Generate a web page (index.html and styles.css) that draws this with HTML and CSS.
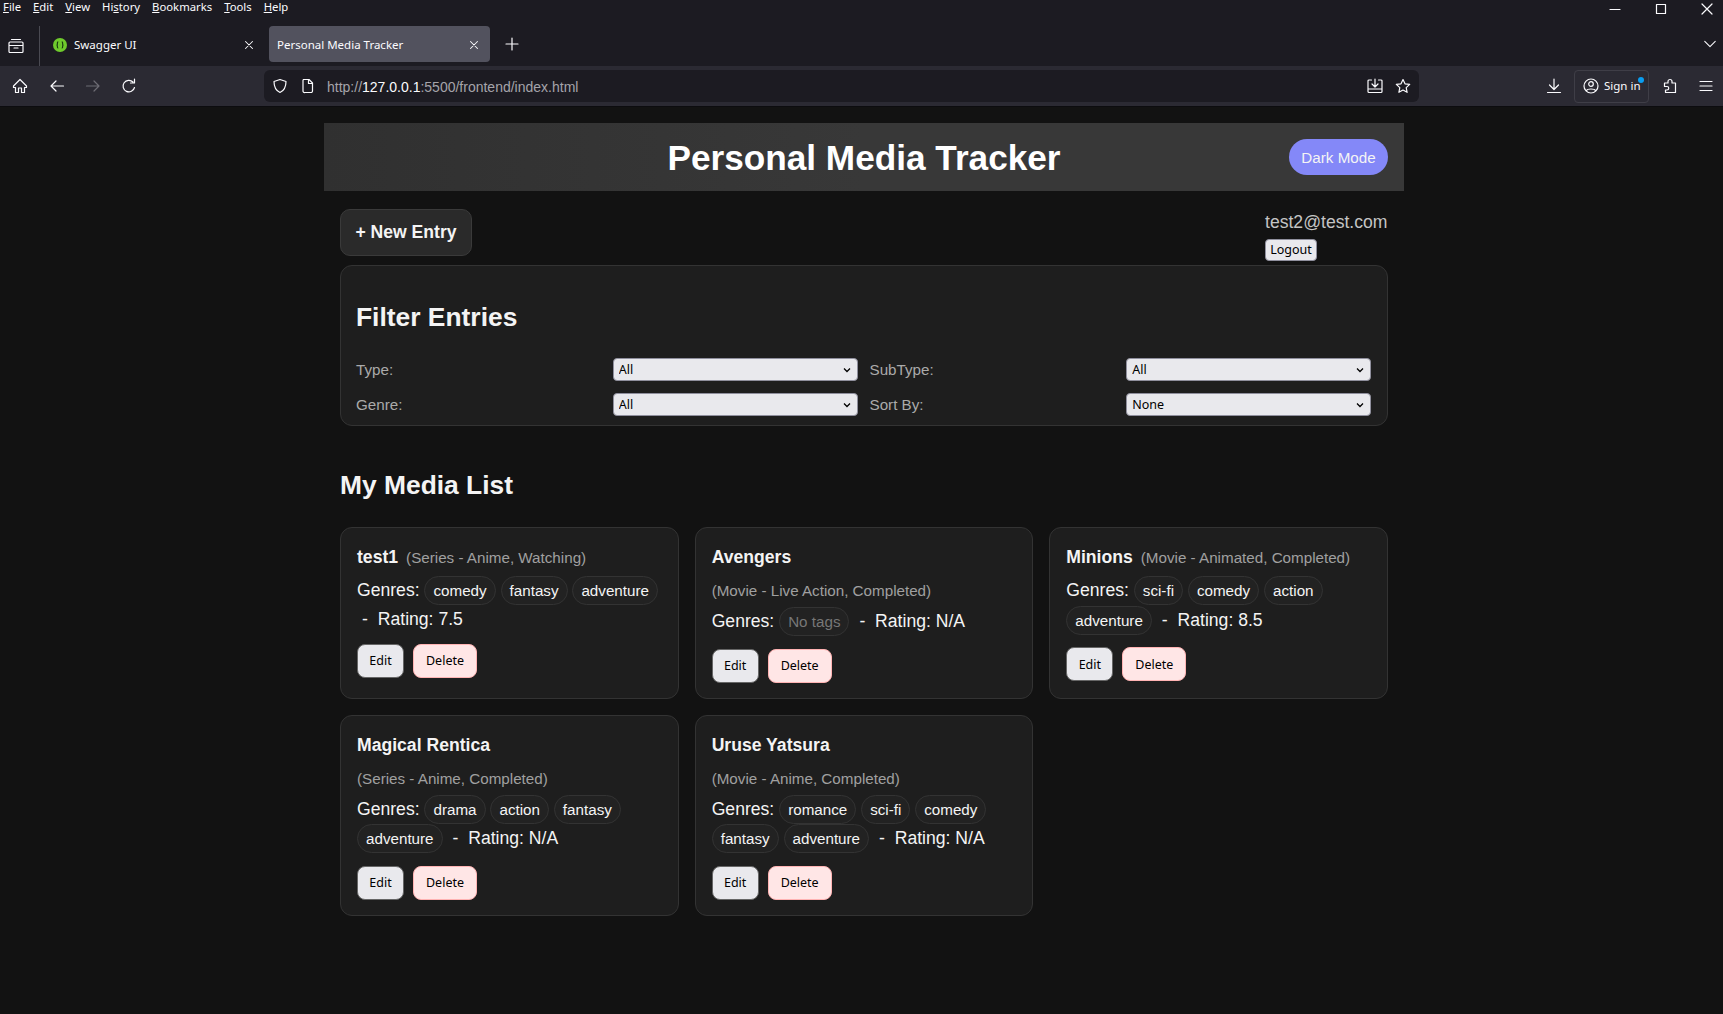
FILE: index.html
```html
<!DOCTYPE html>
<html lang="en">
<head>
    <meta charset="UTF-8">
    <meta name="viewport" content="width=device-width, initial-scale=1.0">
    <title>Personal Media Tracker</title>
    <link rel="stylesheet" href="styles.css">
</head>
<body>

    <!-- Browser chrome -->
    <div class="browser">
        <div class="menubar">
            <span class="menu-item"><u>F</u>ile</span>
            <span class="menu-item"><u>E</u>dit</span>
            <span class="menu-item"><u>V</u>iew</span>
            <span class="menu-item">Hi<u>s</u>tory</span>
            <span class="menu-item"><u>B</u>ookmarks</span>
            <span class="menu-item"><u>T</u>ools</span>
            <span class="menu-item"><u>H</u>elp</span>
            <div class="window-controls">
                <svg class="icon" viewBox="0 0 16 16"><path d="M3 8.500h10"/></svg>
                <svg class="icon" viewBox="0 0 16 16"><path d="M3.500 3.500h9v9h-9z"/></svg>
                <svg class="icon" viewBox="0 0 16 16"><path d="M3 3l10 10M13 3L3 13"/></svg>
            </div>
        </div>

        <div class="tabstrip">
            <div class="tab-view">
                <svg class="icon" viewBox="0 0 16 16"><path d="M3.500 1.500h9M2 4h12a1 1 0 0 1 1 1v8.500a1 1 0 0 1-1 1H2a1 1 0 0 1-1-1V5a1 1 0 0 1 1-1zM1 7.500h14M6 10h4"/></svg>
            </div>
            <div class="tab">
                <span class="favicon"><svg viewBox="0 0 16 16"><path d="M6 4.500C4.800 4.500 5 6 5 7s-1 1-1 1 1 0 1 1-.2 2.500 1 2.500M10 4.500c1.200 0 1 1.500 1 2.500s1 1 1 1-1 0-1 1 .2 2.500-1 2.500M7 8h.1M9 8h.1"/></svg></span>
                <span class="tab-title">Swagger UI</span>
                <svg class="icon tab-close" viewBox="0 0 16 16"><path d="M4 4l8 8M12 4l-8 8"/></svg>
            </div>
            <div class="tab tab-active">
                <span class="tab-title">Personal Media Tracker</span>
                <svg class="icon tab-close" viewBox="0 0 16 16"><path d="M4 4l8 8M12 4l-8 8"/></svg>
            </div>
            <svg class="icon tab-new" viewBox="0 0 16 16"><path d="M8 2v12M2 8h12"/></svg>
            <svg class="icon tab-list" viewBox="0 0 16 16"><path d="M2 5l6 6 6-6"/></svg>
        </div>

        <div class="toolbar">
            <div class="nav-buttons">
                <svg class="icon" viewBox="0 0 16 16"><path d="M8 1.500L1.500 8v1.500h2v5h3V10h3v4.500h3v-5h2V8z"/></svg>
                <svg class="icon" viewBox="0 0 16 16"><path d="M14.500 8H2M7 3L2 8l5 5"/></svg>
                <svg class="icon icon-dim" viewBox="0 0 16 16"><path d="M1.500 8H14M9 3l5 5-5 5"/></svg>
                <svg class="icon" viewBox="0 0 16 16"><path d="M13.500 9.500A5.800 5.800 0 1 1 12 4M13.500 1v4h-4"/></svg>
            </div>
            <div class="urlbar">
                <svg class="icon" viewBox="0 0 16 16"><path d="M8 1.500l6 2c0 5.500-1.500 9-6 11-4.500-2-6-5.500-6-11z"/></svg>
                <svg class="icon url-page" viewBox="0 0 16 16"><path d="M3.500 1.500h5.500l3.500 3.500v8a1.500 1.500 0 0 1-1.500 1.500h-6A1.500 1.500 0 0 1 3 13V3a1.500 1.500 0 0 1 .500-1.500zM8.500 1.500V5.500h4"/></svg>
                <span class="url-text">http://<b>127.0.0.1</b>:5500/frontend/index.html</span>
                <div class="url-actions">
                    <svg class="icon" viewBox="0 0 16 16"><path d="M4.500 2H2a1 1 0 0 0-1 1v10.500a1 1 0 0 0 1 1h12a1 1 0 0 0 1-1V3a1 1 0 0 0-1-1h-2.500M1 11h14M8 1v7M5 6l3 3 3-3"/></svg>
                    <svg class="icon" viewBox="0 0 16 16"><path d="M8 1.500l2 4.300 4.700.6-3.500 3.200.9 4.700L8 12l-4.100 2.300.9-4.700L1.300 6.400 6 5.800z"/></svg>
                </div>
            </div>
            <div class="tool-buttons">
                <svg class="icon" viewBox="0 0 16 16"><path d="M8 1v10M3.500 7L8 11.500 12.500 7M1.500 14.500h13"/></svg>
                <div class="signin">
                    <svg class="icon" viewBox="0 0 16 16"><circle cx="8" cy="8" r="7"/><circle cx="8" cy="6" r="2.300"/><path d="M3.500 12.500c1-2 8-2 9 0"/></svg>
                    <span>Sign in</span>
                    <span class="signin-dot"></span>
                </div>
                <svg class="icon" viewBox="0 0 16 16"><path d="M6 3.500a2 2 0 1 1 4 0V5h3.500v9.500h-10V12H5a1.700 1.700 0 0 0 0-3.500H2.500V5H6z"/></svg>
                <svg class="icon" viewBox="0 0 16 16"><path d="M2 3.500h12M2 8h12M2 12.500h12"/></svg>
            </div>
        </div>
    </div>

    <!-- Page -->
    <div class="container">
        <header class="site-header">
            <span></span>
            <h1>Personal Media Tracker</h1>
            <button class="theme-toggle">Dark Mode</button>
        </header>

        <main class="content">
            <div class="top-bar">
                <button class="new-entry">+ New Entry</button>
                <div class="user-box">
                    <div class="user-email">test2@test.com</div>
                    <button class="logout">Logout</button>
                </div>
            </div>

            <!-- Filters -->
            <section class="filters">
                <h2>Filter Entries</h2>
                <div class="filter-grid">
                    <label>Type:</label>
                    <select><option>All</option></select>
                    <label>SubType:</label>
                    <select><option>All</option></select>
                    <label>Genre:</label>
                    <select><option>All</option></select>
                    <label>Sort By:</label>
                    <select><option>None</option></select>
                </div>
            </section>

            <h2 class="list-title">My Media List</h2>

            <div class="media-grid">
                <article class="card">
                    <div class="card-head">
                        <strong class="card-title">test1</strong>
                        <span class="card-meta">(Series - Anime, Watching)</span>
                    </div>
                    <div class="card-info">
                        Genres: <span class="tag">comedy</span> <span class="tag">fantasy</span> <span class="tag">adventure</span>
                        <span class="sep">-</span> Rating: 7.5
                    </div>
                    <div class="card-actions">
                        <button class="btn-edit">Edit</button>
                        <button class="btn-delete">Delete</button>
                    </div>
                </article>

                <article class="card">
                    <div class="card-head">
                        <strong class="card-title">Avengers</strong>
                        <span class="card-meta">(Movie - Live Action, Completed)</span>
                    </div>
                    <div class="card-info">
                        Genres: <span class="tag tag-empty">No tags</span>
                        <span class="sep">-</span> Rating: N/A
                    </div>
                    <div class="card-actions">
                        <button class="btn-edit">Edit</button>
                        <button class="btn-delete">Delete</button>
                    </div>
                </article>

                <article class="card">
                    <div class="card-head">
                        <strong class="card-title">Minions</strong>
                        <span class="card-meta">(Movie - Animated, Completed)</span>
                    </div>
                    <div class="card-info">
                        Genres: <span class="tag">sci-fi</span> <span class="tag">comedy</span> <span class="tag">action</span> <span class="tag">adventure</span>
                        <span class="sep">-</span> Rating: 8.5
                    </div>
                    <div class="card-actions">
                        <button class="btn-edit">Edit</button>
                        <button class="btn-delete">Delete</button>
                    </div>
                </article>

                <article class="card">
                    <div class="card-head">
                        <strong class="card-title">Magical Rentica</strong>
                        <span class="card-meta">(Series - Anime, Completed)</span>
                    </div>
                    <div class="card-info">
                        Genres: <span class="tag">drama</span> <span class="tag">action</span> <span class="tag">fantasy</span> <span class="tag">adventure</span>
                        <span class="sep">-</span> Rating: N/A
                    </div>
                    <div class="card-actions">
                        <button class="btn-edit">Edit</button>
                        <button class="btn-delete">Delete</button>
                    </div>
                </article>

                <article class="card">
                    <div class="card-head">
                        <strong class="card-title">Uruse Yatsura</strong>
                        <span class="card-meta">(Movie - Anime, Completed)</span>
                    </div>
                    <div class="card-info">
                        Genres: <span class="tag">romance</span> <span class="tag">sci-fi</span> <span class="tag">comedy</span> <span class="tag">fantasy</span> <span class="tag">adventure</span>
                        <span class="sep">-</span> Rating: N/A
                    </div>
                    <div class="card-actions">
                        <button class="btn-edit">Edit</button>
                        <button class="btn-delete">Delete</button>
                    </div>
                </article>
            </div>
        </main>
    </div>

</body>
</html>
```

FILE: styles.css
```css
/* General Styles */
* {
    box-sizing: border-box;
}

html, body {
    height: 100%;
}

body {
    margin: 0;
    overflow: hidden;
    font-family: 'Liberation Sans', Arial, sans-serif;
    font-size: 16px;
    line-height: 1.5;
    background-color: #121212;
    color: #f4f4f4;
}

button, select {
    font-family: 'Noto Sans', sans-serif;
    font-size: 12.5px;
    color: #000;
}

/* Browser chrome */
.browser {
    font-family: 'Noto Sans', sans-serif;
    font-size: 11.5px;
    color: #fbfbfe;
    background-color: #1c1b22;
}

.icon {
    width: 16px;
    height: 16px;
    flex: none;
    fill: none;
    stroke: #fbfbfe;
    stroke-width: 1.2;
    stroke-linejoin: round;
    stroke-linecap: round;
}

.icon-dim {
    stroke: #6d6c74;
}

.menubar {
    display: flex;
    align-items: flex-start;
    height: 26px;
    padding-left: 3px;
    gap: 12px;
    font-size: 11.3px;
    line-height: 14px;
}

.window-controls {
    display: flex;
    gap: 30px;
    margin-left: auto;
    padding-right: 8px;
    padding-top: 1px;
}

.tabstrip {
    display: flex;
    align-items: center;
    height: 40px;
    padding-bottom: 4px;
}

.tab-view {
    display: flex;
    align-items: center;
    width: 40px;
    height: 40px;
    margin-bottom: -4px;
    padding-left: 8px;
    border-right: 1px solid #4a4a52;
}

.tab {
    display: flex;
    align-items: center;
    width: 221px;
    height: 36px;
    padding: 2px 5px 0 13px;
    border-radius: 4px;
}

.tab-active {
    background-color: #52525e;
    padding: 2px 9px 0 8px;
    margin-left: 8px;
}

.tab-title {
    flex: 1;
}

.tab-close {
    width: 14px;
    height: 14px;
}

.favicon {
    display: flex;
    align-items: center;
    justify-content: center;
    width: 14px;
    height: 14px;
    margin-right: 7px;
    border-radius: 50%;
    background-color: #6fcb2c;
}

.favicon svg {
    width: 14px;
    height: 14px;
    fill: none;
    stroke: #173a10;
    stroke-width: 1.3;
}

.tab-new {
    margin-left: 14px;
}

.tab-list {
    margin-left: auto;
    margin-right: 6px;
    width: 14px;
    height: 14px;
}

.toolbar {
    display: flex;
    align-items: center;
    height: 41px;
    padding-left: 12px;
    background-color: #2b2a33;
    border-bottom: 1px solid #0c0c0f;
}

.nav-buttons {
    display: flex;
    gap: 20px;
    width: 252px;
}

.nav-buttons .icon:first-child {
    margin-right: 1px;
}

.urlbar {
    display: flex;
    align-items: center;
    width: 1155px;
    height: 32px;
    padding: 0 8px 0 8px;
    border-radius: 6px;
    background-color: #1c1b22;
}

.url-page {
    margin-left: 12px;
}

.url-text {
    margin-left: 11px;
    padding-top: 3px;
    font-family: 'Liberation Sans', Arial, sans-serif;
    font-size: 14px;
    color: #a5a4aa;
}

.url-text b {
    font-weight: normal;
    color: #fbfbfe;
}

.url-actions {
    display: flex;
    gap: 12px;
    margin-left: auto;
}

.tool-buttons {
    display: flex;
    align-items: center;
    margin-left: 127px;
    gap: 12px;
}

.signin {
    position: relative;
    display: flex;
    align-items: center;
    gap: 5px;
    width: 75px;
    height: 33px;
    padding-left: 8px;
    border: 1px solid #3f3e47;
    border-radius: 4px;
    font-size: 11.5px;
}

.signin-dot {
    position: absolute;
    top: 6px;
    right: 4px;
    width: 6px;
    height: 6px;
    border-radius: 50%;
    background-color: #0a9df0;
}

.tool-buttons .signin + .icon {
    margin-left: 1px;
}

.tool-buttons .icon:last-child {
    margin-left: 8px;
}

/* Page */
.container {
    width: 1080px;
    margin: 16px 0 0 324px;
}

.site-header {
    display: grid;
    grid-template-columns: 1fr auto 1fr;
    align-items: center;
    height: 68px;
    padding: 0 16px;
    background: linear-gradient(90deg, #303030, #383838 50%, #383838);
}

.site-header h1 {
    margin: 2px 0 0;
    font-size: 35.2px;
    line-height: 1.2;
    color: #fff;
}

.theme-toggle {
    justify-self: end;
    height: 36px;
    width: 99px;
    padding: 0;
    border: none;
    border-radius: 18px;
    background-color: #8488f8;
    color: #f4f4f4;
    font-family: 'Liberation Sans', Arial, sans-serif;
    font-size: 15.2px;
}

.content {
    padding: 18px 16px 0;
}

.top-bar {
    display: flex;
    justify-content: space-between;
    align-items: flex-start;
    margin-bottom: 4px;
}

.new-entry {
    width: 132px;
    height: 47px;
    padding: 0;
    border: 1px solid #3a3a3a;
    border-radius: 10px;
    background-color: #2a2a2a;
    color: #f4f4f4;
    font-family: 'Liberation Sans', Arial, sans-serif;
    font-size: 17.6px;
    font-weight: bold;
}

.user-box {
    width: 123px;
    color: #c4c4c4;
}

.user-email {
    font-size: 17.6px;
    line-height: 27px;
    margin-bottom: 3px;
}

.logout {
    display: block;
    width: 52px;
    height: 22px;
    padding: 0;
    border: 1px solid #8f8f9d;
    border-radius: 4px;
    background-color: #e9e9ed;
    line-height: 18px;
}

/* Filters */
.filters {
    padding: 16px 16px 9px 15px;
    border: 1px solid #333;
    border-radius: 12px;
    background-color: #1e1e1e;
}

.filters h2 {
    margin: 15px 0 20px;
    font-size: 26.4px;
    line-height: 41px;
}

.filter-grid {
    display: grid;
    grid-template-columns: repeat(4, 1fr);
    gap: 12px;
    align-items: center;
}

.filter-grid label {
    font-size: 15.2px;
    color: #aaa;
    line-height: 23px;
}

.filter-grid select {
    width: 100%;
    height: 23px;
    padding: 0 18px 0 5px;
    border: 1px solid #8f8f9d;
    border-radius: 4px;
    appearance: none;
    background-color: #e9e9ed;
    background-image: url("data:image/svg+xml,%3Csvg xmlns='http://www.w3.org/2000/svg' viewBox='0 0 8 6'%3E%3Cpath d='M1 1.500l3 3 3-3' fill='none' stroke='%23000' stroke-width='1.300'/%3E%3C/svg%3E");
    background-repeat: no-repeat;
    background-position: right 6px center;
    background-size: 8px 6px;
}

.list-title {
    margin: 39px 0 21px;
    font-size: 26.4px;
    line-height: 41px;
}

/* Media cards */
.media-grid {
    display: grid;
    grid-template-columns: repeat(3, 1fr);
    gap: 16px;
}

.card {
    padding: 16px 16px 15px;
    border: 1px solid #333;
    border-radius: 12px;
    background-color: #1e1e1e;
}

.card-head {
    display: flex;
    flex-wrap: wrap;
    align-items: baseline;
    column-gap: 8px;
    row-gap: 11px;
    margin-bottom: 6px;
}

.card-title {
    font-size: 17.6px;
    line-height: 26px;
}

.card-meta {
    font-size: 15.2px;
    line-height: 20px;
    color: #a0a0a0;
}

.card-info {
    font-size: 17.6px;
    line-height: 26.4px;
}

.tag {
    display: inline-block;
    padding: 2px 8px;
    margin-bottom: 0.5px;
    border: 1px solid #333;
    border-radius: 999px;
    background-color: #222;
    font-size: 15.2px;
    line-height: 23px;
}

.tag-empty {
    color: #777;
}

.sep {
    margin: 0 5px 0 5px;
}

.card-actions {
    display: flex;
    gap: 9px;
    margin-top: 12px;
}

.btn-edit, .btn-delete {
    height: 34px;
    padding: 0;
    border-radius: 8px;
}

.btn-edit {
    width: 47px;
    border: 1px solid #666;
    background-color: #e9e9ed;
}

.btn-delete {
    width: 64px;
    border: 1px solid #ffb3b3;
    background-color: #ffe6e6;
}
```
